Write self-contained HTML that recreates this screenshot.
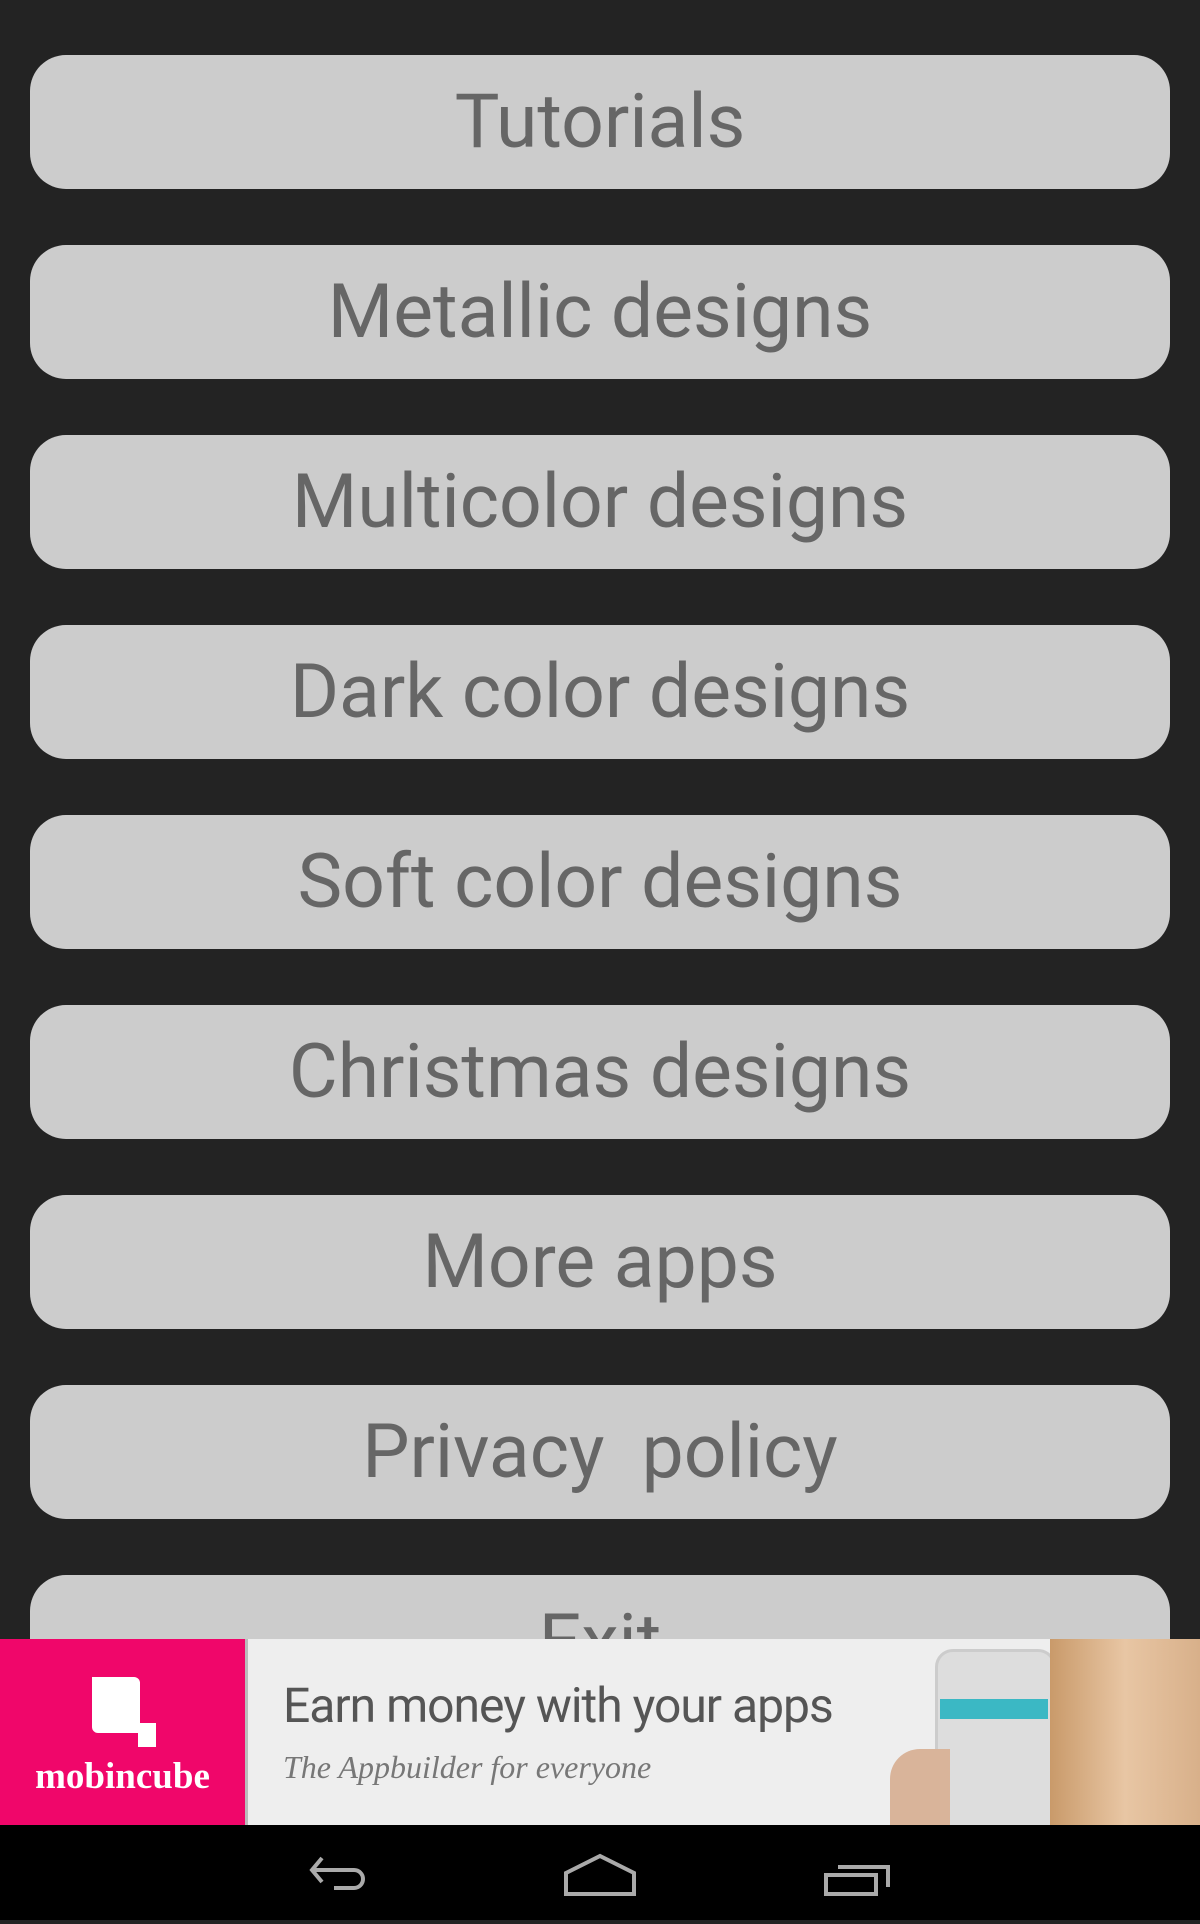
<!DOCTYPE html>
<html><head><style>
body{margin:0;width:1200px;height:1920px;background:#232323;position:relative;overflow:hidden;font-family:"Roboto","Liberation Sans","DejaVu Sans",sans-serif}
.b{position:absolute;left:30px;width:1140px;height:134px;background:#cccccc;border-radius:36px;color:#666;font-size:75px;line-height:134px;text-align:center;white-space:pre}
.ad{position:absolute;left:0;top:1639px;width:1200px;height:186px;background:#eeeeee;overflow:hidden}
.nav{position:absolute;left:0;top:1825px;width:1200px;height:95px;background:#000}
</style></head><body>
<div class="b" style="top:55px">Tutorials</div>
<div class="b" style="top:245px">Metallic designs</div>
<div class="b" style="top:435px">Multicolor designs</div>
<div class="b" style="top:625px">Dark color designs</div>
<div class="b" style="top:815px">Soft color designs</div>
<div class="b" style="top:1005px">Christmas designs</div>
<div class="b" style="top:1195px">More apps</div>
<div class="b" style="top:1385px">Privacy  policy</div>
<div class="b" style="top:1575px">Exit</div>
<div class="ad">
 <div style="position:absolute;left:0;top:0;width:245px;height:186px;background:#f0066a"></div>
 <div style="position:absolute;left:245px;top:0;width:3px;height:186px;background:#bbb"></div>
 <svg style="position:absolute;left:0;top:0" width="245" height="186"><path d="M92 38 h42 a6 6 0 0 1 6 6 v40 h16 v24 h-18 v-14 h-40 a6 6 0 0 1 -6 -6 z" fill="#fff"/></svg>
 <div style="position:absolute;left:0;width:245px;top:116px;text-align:center;color:#fff;font:bold 37px 'Liberation Serif',serif">mobincube</div>
 <div style="position:absolute;left:283px;top:38px;color:#555;font-size:48px;letter-spacing:-1px">Earn money with your apps</div>
 <div style="position:absolute;left:283px;top:110px;color:#777;font:italic 32px 'Liberation Serif',serif">The Appbuilder for everyone</div>
 <div style="position:absolute;left:935px;top:10px;width:115px;height:190px;background:#ddd;border:3px solid #ccc;border-radius:18px"></div>
 <div style="position:absolute;left:940px;top:60px;width:108px;height:20px;background:#3bb8c4"></div>
 <div style="position:absolute;left:1050px;top:0;width:150px;height:186px;background:linear-gradient(90deg,#c99a6a,#e8c6a4 50%,#d8b08a)"></div>
 <div style="position:absolute;left:890px;top:110px;width:60px;height:76px;background:#d9b49a;border-radius:30px 0 0 0"></div>
</div>
<div class="nav">
 <svg width="1200" height="95">
  <g fill="none" stroke="#aaa" stroke-width="4">
   <path d="M322 33 l-10 12 l10 12 M314 45 h40 a9 9 0 0 1 0 18 h-20"/>
   <path d="M566 48 l34 -17 l34 17 v21 h-68 z"/>
   <path d="M826 50 h50 v19 h-50 z M838 42 h50 v20"/>
  </g>
 </svg>
</div>
</body></html>
